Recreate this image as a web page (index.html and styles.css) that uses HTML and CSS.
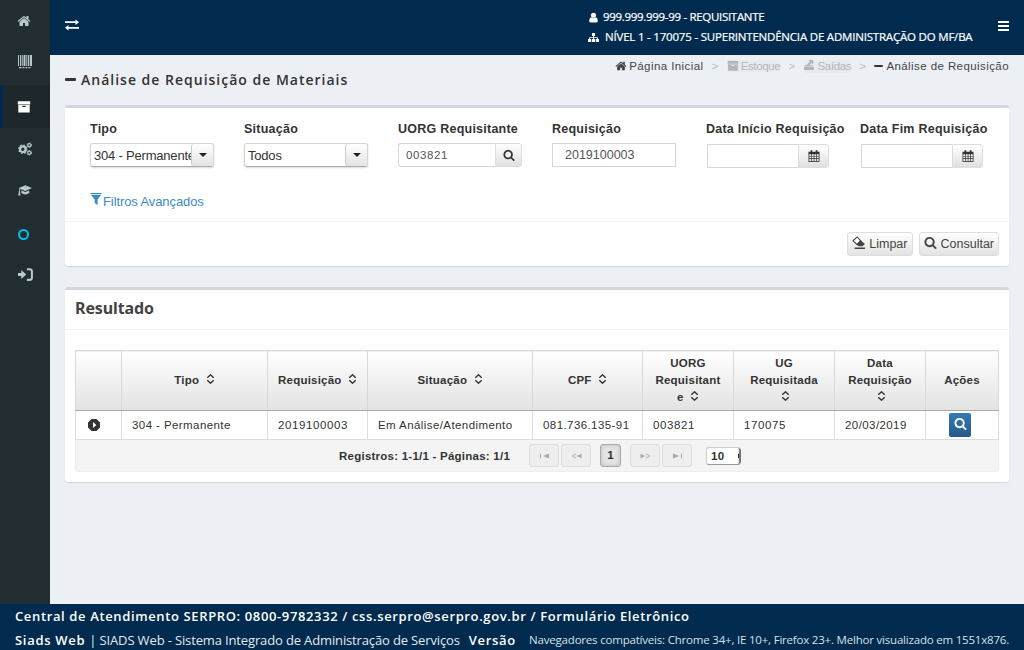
FILE: index.html
```html
<!DOCTYPE html>
<html lang="pt-br">
<head>
    <meta charset="UTF-8">
    <meta name="viewport" content="width=device-width, initial-scale=1.0">
    <title>Siads Web</title>
    <link rel="stylesheet" href="styles.css">
</head>
<body>
    <svg class="sprite">
        <symbol id="i-search" viewBox="0 0 1792 1792"><path d="M1216 832q0-185-131.5-316.5t-316.5-131.5-316.5 131.5-131.5 316.5 131.5 316.5 316.5 131.5 316.5-131.5 131.5-316.5zm512 832q0 52-38 90t-90 38q-54 0-90-38l-343-342q-179 124-399 124-143 0-273.5-55.5t-225-150-150-225-55.5-273.5 55.5-273.5 150-225 225-150 273.5-55.5 273.5 55.5 225 150 150 225 55.5 273.5q0 220-124 399l343 343q37 37 37 90z"/></symbol>
        <symbol id="i-home" viewBox="0 0 1792 1792"><path d="M1472 992v480q0 26-19 45t-45 19h-384v-384h-256v384h-384q-26 0-45-19t-19-45v-480q0-1 .5-3t.5-3l575-474 575 474q1 2 1 6zm223-69l-62 74q-8 9-21 11h-3q-13 0-21-7l-692-577-692 577q-12 8-24 7-13-2-21-11l-62-74q-8-10-7-23.5t11-21.5l719-599q32-26 76-26t76 26l244 204v-195q0-14 9-23t23-9h192q14 0 23 9t9 23v408l219 182q10 8 11 21.5t-7 23.5z"/></symbol>
        <symbol id="i-barcode" viewBox="0 0 14 14"><path d="M0 0h1v11H0zM2 0h1v11H2zM3.700 0h1v11h-1zM5.500 0h2v11h-2zM8.300 0h1v11h-1zM10 0h1.300v11H10zM12 0h2v11h-2zM1 12h2.500v1.200H1zM4.500 12h2v1.200h-2zM7.500 12h2v1.200h-2zM10.500 12h2v1.200h-2z"/></symbol>
        <symbol id="i-archive" viewBox="0 0 14 14"><path fill-rule="evenodd" d="M.8 1.200h12.400v3.300H.8zM1.300 4.900h11.400v7.600H1.300zM5.300 5.700V7h3.400V5.700z"/></symbol>
        <symbol id="i-cogs" viewBox="0 0 14 14">
            <g fill="none" stroke="currentColor">
                <circle cx="4.800" cy="7.200" r="2.800" stroke-width="2.200"/>
                <circle cx="4.800" cy="7.200" r="4.100" stroke-width="1.300" stroke-dasharray="1.700 1.520"/>
                <circle cx="11.300" cy="3.200" r="1.600" stroke-width="1.300"/>
                <circle cx="11.300" cy="3.200" r="2.300" stroke-width=".8" stroke-dasharray="1.100 1.300"/>
                <circle cx="11.300" cy="10.800" r="1.600" stroke-width="1.300"/>
                <circle cx="11.300" cy="10.800" r="2.300" stroke-width=".8" stroke-dasharray="1.100 1.300"/>
            </g>
        </symbol>
        <symbol id="i-cap" viewBox="0 0 14 14"><path d="M7.300 1.300L14 4.100 7.300 7 2.400 5.100C2 5.800 1.900 6.400 1.900 7.200q.8.600.2 1.400l.5 3H.2l.6-3Q.2 7.800 1 7.200 1 5.800 1.500 4.700L.8 4.100zM3.400 6.400L7.300 8l3.800-1.600.2 2.400q-1.500 1.700-4 1.700t-4-1.700z"/></symbol>
        <symbol id="i-signin" viewBox="0 0 14 14"><path d="M0 5.600h3V2.800L7.800 7 3 11.200V8.400H0z"/><path d="M8.300 2h2.500Q13 2 13 4.200v5.600Q13 12 10.800 12H8.300" fill="none" stroke="currentColor" stroke-width="1.900"/></symbol>
        <symbol id="i-exchange" viewBox="0 0 14 14"><path d="M0 3.300h10.500V1.500L14 4.200l-3.500 2.700V5.100H0zM14 8.900H3.500V7.100L0 9.800l3.500 2.700v-1.800H14z"/></symbol>
        <symbol id="i-user" viewBox="0 0 12 12"><circle cx="6" cy="3.600" r="2.800"/><path d="M3.300 5.700Q1.300 6.500 1.300 9.800q0 1.700 1.700 1.700h6q1.700 0 1.700-1.700 0-3.300-2-4.100Q6 8 3.300 5.700z"/></symbol>
        <symbol id="i-sitemap" viewBox="0 0 12 12"><path d="M4.300 1h3.400v3.300H6.500v1.400h4.200v2H12V11H8.500V7.700h1.200V6.600H6.500v1.100h1.200V11H4.300V7.700h1.200V6.600H2.300v1.100h1.200V11H0V7.700h1.300v-2h4.200V4.300H4.300z"/></symbol>
        <symbol id="i-export" viewBox="0 0 12 12"><path d="M0 8.500h12V12H0zM1 6.200h10v1.500H1zM5.500 0H11v5.300L9.300 3.700 6.500 6.200H3l4-4z"/></symbol>
        <symbol id="i-calendar" viewBox="0 0 12 12"><path fill-rule="evenodd" d="M.5 1.800h2V.3h1.800v1.500h3.400V.3h1.800v1.500h2V12H.5zM1.300 4.300v1.600h1.800V4.300zm2.500 0v1.600h1.900V4.300zm2.600 0v1.600h1.800V4.300zm2.500 0v1.600h1.800V4.300zM1.300 6.600v1.700h1.800V6.600zm2.500 0v1.700h1.900V6.600zm2.600 0v1.700h1.800V6.600zm2.500 0v1.700h1.800V6.600zM1.300 9v2.200h1.800V9zm2.500 0v2.200h1.900V9zm2.600 0v2.200h1.800V9zm2.500 0v2.200h1.800V9z"/></symbol>
        <symbol id="i-filter" viewBox="0 0 12 12"><path d="M.5 0h11v1.300H.5zM1 2h10L7.600 6.500V12L4.700 10V6.500z"/></symbol>
        <symbol id="i-eraser" viewBox="0 0 12 12"><path d="M1 4.400L4.800.9l3.300 3.600L4.700 8z" fill="#fff" stroke="currentColor"/><path d="M7.700 3.700L12 7.400 9.600 9.500H6.300L4 7.600zM2.500 10.500H12V12H2.500z"/></symbol>
        <symbol id="i-sort" viewBox="0 0 8 10"><path d="M.8 3.800L4 .8l3.200 3M.8 6.200L4 9.200l3.200-3" fill="none" stroke="currentColor" stroke-width="1.400"/></symbol>
        <symbol id="i-play" viewBox="0 0 12 12"><path fill-rule="evenodd" d="M3.500 0h5L12 3.500v5L8.500 12h-5L0 8.500v-5zM5 3v6l3.300-3z"/></symbol>
        <symbol id="i-first" viewBox="0 0 10 6"><path d="M.5.500h1v5h-1zM9.500.5v5L3.500 3z"/></symbol>
        <symbol id="i-prev" viewBox="0 0 12 6"><path d="M11.500.5v5L6 3z"/><path d="M5.500.7L1.300 3l4.200 2.300" fill="none" stroke="currentColor"/></symbol>
    </svg>

    <div class="wrapper">
        <nav class="sidebar">
            <a class="menu-item"><svg><use href="#i-home"/></svg></a>
            <a class="menu-item"><svg><use href="#i-barcode"/></svg></a>
            <a class="menu-item active"><svg><use href="#i-archive"/></svg></a>
            <a class="menu-item"><svg><use href="#i-cogs"/></svg></a>
            <a class="menu-item"><svg><use href="#i-cap"/></svg></a>
            <a class="menu-item"><span class="circle"></span></a>
            <a class="menu-item"><svg><use href="#i-signin"/></svg></a>
        </nav>

        <div class="main">
            <header class="navbar">
                <svg class="toggle"><use href="#i-exchange"/></svg>
                <div class="user-info">
                    <div class="user-line"><svg><use href="#i-user"/></svg><span class="user-name">999.999.999-99 - REQUISITANTE</span></div>
                    <div class="user-line"><svg><use href="#i-sitemap"/></svg><span class="user-unit">NÍVEL 1 - 170075 - SUPERINTENDÊNCIA DE ADMINISTRAÇÃO DO MF/BA</span></div>
                </div>
                <div class="bars"><i></i><i></i><i></i></div>
            </header>

            <section class="content-header">
                <h1><i class="minus"></i>Análise de Requisição de Materiais</h1>
                <div class="breadcrumb">
                    <span class="crumb"><svg><use href="#i-home"/></svg>Página Inicial</span>
                    <span class="sep">&gt;</span>
                    <span class="crumb disabled"><svg><use href="#i-archive"/></svg>Estoque</span>
                    <span class="sep">&gt;</span>
                    <span class="crumb disabled"><svg class="export"><use href="#i-export"/></svg>Saídas</span>
                    <span class="sep">&gt;</span>
                    <span class="crumb"><i class="minus"></i>Análise de Requisição</span>
                </div>
            </section>

            <div class="box filter-box">
                <div class="filters">
                    <div class="field">
                        <label>Tipo</label>
                        <div class="select"><span class="select-text">304 - Permanente</span><span class="select-arrow"></span></div>
                    </div>
                    <div class="field">
                        <label>Situação</label>
                        <div class="select"><span class="select-text">Todos</span><span class="select-arrow"></span></div>
                    </div>
                    <div class="field">
                        <label>UORG Requisitante</label>
                        <div class="input-group"><span class="input">003821</span><span class="addon"><svg><use href="#i-search"/></svg></span></div>
                    </div>
                    <div class="field">
                        <label>Requisição</label>
                        <div class="input single">2019100003</div>
                    </div>
                    <div class="field">
                        <label>Data Início Requisição</label>
                        <div class="input-group date"><span class="input"></span><span class="addon"><svg><use href="#i-calendar"/></svg></span></div>
                    </div>
                    <div class="field">
                        <label>Data Fim Requisição</label>
                        <div class="input-group date"><span class="input"></span><span class="addon"><svg><use href="#i-calendar"/></svg></span></div>
                    </div>
                </div>
                <a class="advanced"><svg><use href="#i-filter"/></svg>Filtros Avançados</a>
                <div class="box-footer">
                    <button class="btn"><svg><use href="#i-eraser"/></svg>Limpar</button>
                    <button class="btn"><svg><use href="#i-search"/></svg>Consultar</button>
                </div>
            </div>

            <div class="box result-box">
                <h2>Resultado</h2>
                <table class="grid">
                    <colgroup>
                        <col class="c-toggle"><col class="c-type"><col class="c-req"><col class="c-sit"><col class="c-cpf"><col class="c-uorg"><col class="c-ug"><col class="c-date"><col>
                    </colgroup>
                    <thead>
                        <tr>
                            <th></th>
                            <th>Tipo <svg><use href="#i-sort"/></svg></th>
                            <th>Requisição <svg><use href="#i-sort"/></svg></th>
                            <th>Situação <svg><use href="#i-sort"/></svg></th>
                            <th>CPF <svg><use href="#i-sort"/></svg></th>
                            <th>UORG<br>Requisitant<br>e <svg><use href="#i-sort"/></svg></th>
                            <th>UG<br>Requisitada<br><svg><use href="#i-sort"/></svg></th>
                            <th>Data<br>Requisição<br><svg><use href="#i-sort"/></svg></th>
                            <th>Ações</th>
                        </tr>
                    </thead>
                    <tbody>
                        <tr>
                            <td class="expand"><svg><use href="#i-play"/></svg></td>
                            <td>304 - Permanente</td>
                            <td class="number">2019100003</td>
                            <td>Em Análise/Atendimento</td>
                            <td>081.736.135-91</td>
                            <td class="number">003821</td>
                            <td class="number">170075</td>
                            <td>20/03/2019</td>
                            <td class="actions"><a class="btn-view"><svg><use href="#i-search"/></svg></a></td>
                        </tr>
                    </tbody>
                </table>
                <div class="paginator">
                    <span class="records">Registros: 1-1/1 - Páginas: 1/1</span>
                    <span class="page-btn"><svg><use href="#i-first"/></svg></span>
                    <span class="page-btn"><svg><use href="#i-prev"/></svg></span>
                    <span class="page-current">1</span>
                    <span class="page-btn flip"><svg><use href="#i-prev"/></svg></span>
                    <span class="page-btn flip"><svg><use href="#i-first"/></svg></span>
                    <span class="page-size">10<i></i></span>
                </div>
            </div>
        </div>
    </div>

    <footer class="footer">
        <div class="contact">Central de Atendimento SERPRO: 0800-9782332 / css.serpro@serpro.gov.br / Formulário Eletrônico</div>
        <div class="about">
            <span class="strong">Siads Web</span>
            <span class="system">| SIADS Web - Sistema Integrado de Administração de Serviços</span>
            <span class="strong version">Versão</span>
            <span class="browsers">Navegadores compatíveis: Chrome 34+, IE 10+, Firefox 23+. Melhor visualizado em 1551x876.</span>
        </div>
    </footer>
</body>
</html>
```
FILE: styles.css
```css
* {
    box-sizing: border-box;
}

body {
    margin: 0;
    height: 650px;
    display: flex;
    flex-direction: column;
    overflow: hidden;
    background-color: #ecf0f5;
    color: #333;
    font-family: "Liberation Sans", Arial, sans-serif;
    font-size: 13px;
}

svg {
    fill: currentColor;
    flex: none;
}

.sprite {
    display: none;
}

.wrapper {
    display: flex;
    height: 604px;
}

/* Sidebar */
.sidebar {
    flex: none;
    width: 50px;
    background-color: #222d32;
    color: #b8c7ce;
}

.menu-item {
    display: flex;
    align-items: center;
    height: 42px;
    padding-left: 18px;
}

.menu-item svg {
    width: 14px;
    height: 14px;
}

.menu-item:nth-child(1) svg {
    margin-left: -1px;
}

.menu-item:nth-child(2) {
    height: 39px;
    margin-bottom: 4px;
}

.menu-item:nth-child(5) {
    height: 41px;
}

.menu-item:nth-child(6) {
    height: 46px;
}

.menu-item:nth-child(7) {
    height: 35px;
}

.menu-item:nth-child(7) svg {
    width: 15px;
    height: 15px;
}

.menu-item.active {
    height: 43px;
    padding-left: 14px;
    border-left: 3px solid #002b4e;
    background-color: #1e282c;
    color: #fff;
}

.circle {
    width: 11px;
    height: 11px;
    border: 2px solid #00c0ef;
    border-radius: 50%;
}

/* Header */
.main {
    flex: 1;
    min-width: 0;
}

.navbar {
    display: flex;
    height: 55px;
    background-color: #002b4e;
    color: #fff;
    font-family: "Open Sans", sans-serif;
    font-size: 11.5px;
}

.toggle {
    width: 14px;
    height: 14px;
    margin: 18px 0 0 15px;
}

.user-info {
    width: 410px;
    margin-left: auto;
    padding-top: 6px;
}

.user-line {
    display: flex;
    align-items: center;
    height: 20px;
    white-space: nowrap;
}

.user-line svg {
    width: 11px;
    height: 11px;
    margin-top: 2px;
    margin-right: 4px;
}

.user-line span {
    -webkit-text-stroke: 0.2px #fff;
}

.user-name {
    letter-spacing: -0.31px;
}

.user-unit {
    margin-left: 2px;
    letter-spacing: -0.2px;
}

.bars {
    width: 11px;
    margin: 21px 15px 0 0;
}

.bars i {
    display: block;
    height: 2px;
    margin-bottom: 2px;
    background-color: #fff;
}

.content-header {
    display: flex;
    justify-content: space-between;
    height: 50px;
    padding: 0 15px;
}

.content-header h1 {
    display: flex;
    align-items: center;
    height: 20px;
    margin: 14px 0 0;
    font-family: "Open Sans", sans-serif;
    font-size: 14px;
    font-weight: 600;
    letter-spacing: 1px;
    white-space: nowrap;
}

.minus {
    width: 11px;
    height: 3px;
    margin-right: 5px;
    border-radius: 1px;
    background-color: #333;
}

.breadcrumb {
    display: flex;
    align-items: center;
    height: 14px;
    margin-top: 4px;
    font-size: 11.5px;
    letter-spacing: 0.42px;
    white-space: nowrap;
    color: #444;
}

.crumb {
    display: flex;
    align-items: center;
}

.crumb svg {
    width: 12px;
    height: 12px;
    margin-right: 2px;
}

.crumb .minus {
    width: 9px;
    height: 2px;
    margin-right: 3px;
}

.crumb.disabled {
    background-color: #e8ebee;
    color: #b3b5b8;
    letter-spacing: -0.35px;
}

.crumb .export {
    width: 10px;
    height: 10px;
    margin-right: 4px;
    margin-bottom: 3px;
}

.sep {
    padding: 0 8px;
    color: #bbb;
}

/* Boxes */
.box {
    margin: 0 15px 20px;
    border-top: 3px solid #d2d6de;
    border-radius: 3px;
    background-color: #fff;
    box-shadow: 0 1px 1px rgba(0, 0, 0, 0.1);
}

.filter-box {
    height: 161px;
    margin-bottom: 21px;
}

.filters {
    display: grid;
    grid-template-columns: repeat(6, 154px);
    height: 78px;
    padding: 12px 0 0 25px;
}

.field label {
    display: block;
    height: 23px;
    line-height: 18px;
    font-size: 12.5px;
    font-weight: bold;
    letter-spacing: 0.24px;
    white-space: nowrap;
}

.select {
    display: flex;
    width: 124px;
    height: 24px;
    border: 1px solid #d5d5d5;
    border-bottom-color: #aaa;
    border-radius: 3px;
    box-shadow: 0 1px 2px rgba(0, 0, 0, 0.15);
}

.select-text {
    flex: 1;
    padding-left: 3px;
    line-height: 23px;
    letter-spacing: -0.2px;
    overflow: hidden;
    white-space: nowrap;
}

.select-arrow {
    display: flex;
    align-items: center;
    justify-content: center;
    width: 22px;
    border-left: 1px solid #ccc;
    border-radius: 3px;
    background: linear-gradient(#fff, #e3e3e3);
}

.select-arrow::before {
    content: "";
    border: 4px solid transparent;
    border-top-color: #222;
    border-bottom: 0;
}

.input-group {
    display: flex;
    width: 124px;
    height: 24px;
}

.input {
    flex: 1;
    border: 1px solid #d2d6de;
    padding-left: 7px;
    line-height: 22px;
    font-size: 11.5px;
    letter-spacing: 0.6px;
    color: #555;
}

.input-group .input {
    border-right: 0;
    border-radius: 3px 0 0 3px;
}

.input.single {
    width: 124px;
    height: 24px;
    padding-left: 12px;
    font-size: 12.5px;
    letter-spacing: normal;
}

.addon {
    display: flex;
    align-items: center;
    justify-content: center;
    width: 27px;
    border: 1px solid #ddd;
    border-radius: 0 3px 3px 0;
    background: linear-gradient(#fff, #e0e0e0);
}

.addon svg {
    width: 12px;
    height: 12px;
}

.input-group.date {
    width: 122px;
    margin: 1px 0 0 1px;
}

.date .input {
    border-radius: 0;
}

.date .addon {
    width: 31px;
}

.advanced {
    display: flex;
    height: 35px;
    padding: 7px 0 0 25px;
    color: #3c8dbc;
    line-height: 18px;
    letter-spacing: -0.1px;
}

.advanced svg {
    width: 12px;
    height: 12px;
    margin-right: 1px;
}

.box-footer {
    display: flex;
    justify-content: flex-end;
    gap: 6px;
    padding: 10px 10px 0;
    border-top: 1px solid #f4f4f4;
}

.btn {
    display: flex;
    align-items: center;
    height: 24px;
    padding: 0 4px;
    border: 1px solid #ddd;
    border-radius: 3px;
    background: linear-gradient(#fff, #e3e3e3);
    color: #444;
    font-family: inherit;
    font-size: 12.5px;
}

.btn svg {
    width: 13px;
    height: 13px;
    margin: 0 4px 4px 0;
}

/* Result table */
.result-box {
    height: 195px;
    margin-bottom: 0;
}

.result-box h2 {
    height: 40px;
    margin: 0 0 20px;
    padding-left: 10px;
    border-bottom: 1px solid #f4f4f4;
    font-family: "Noto Sans", sans-serif;
    font-size: 16px;
    line-height: 37px;
    letter-spacing: -0.1px;
    color: #444;
}

.grid {
    width: 924px;
    margin-left: 10px;
    table-layout: fixed;
    border-collapse: collapse;
    font-size: 11.5px;
}

.c-toggle { width: 46px; }
.c-type { width: 146px; }
.c-req { width: 100px; }
.c-sit { width: 165px; }
.c-cpf { width: 110px; }
.c-uorg { width: 91px; }
.c-ug { width: 101px; }
.c-date { width: 91px; }

.grid th {
    height: 60px;
    padding: 0;
    border: 1px solid #d8d8d8;
    border-bottom-color: #aaa;
    background: linear-gradient(#fff, #e2e2e2);
    line-height: 17px;
    letter-spacing: 0.22px;
    white-space: nowrap;
}

.grid th svg {
    width: 9px;
    height: 10px;
    margin-left: 3px;
}

.grid td {
    height: 29px;
    padding: 0 0 0 10px;
    border: 1px solid #ddd;
    letter-spacing: 0.42px;
    white-space: nowrap;
}

.grid td.number {
    letter-spacing: 0.6px;
}

.grid td.expand {
    padding-left: 12px;
}

.expand svg {
    display: block;
    width: 12px;
    height: 12px;
}

.grid td.actions {
    padding-left: 23px;
}

.btn-view {
    display: flex;
    justify-content: center;
    width: 22px;
    height: 24px;
    padding-top: 4px;
    border-radius: 2px;
    background: linear-gradient(#337ab7, #265a88);
    color: #fff;
}

.btn-view svg {
    width: 13px;
    height: 13px;
}

.paginator {
    display: flex;
    align-items: center;
    height: 32px;
    margin: 0 10px;
    padding-left: 263px;
    border: 1px solid #eee;
    border-top: 0;
    border-radius: 0 0 3px 3px;
    background-color: #f4f4f4;
    font-size: 11.5px;
    font-weight: bold;
}

.records {
    width: 190px;
    letter-spacing: 0.24px;
    white-space: nowrap;
}

.page-btn {
    display: flex;
    align-items: center;
    justify-content: center;
    width: 30px;
    height: 23px;
    margin-right: 2px;
    border: 1px solid #ddd;
    border-radius: 3px;
    background-color: #eee;
    color: #aaa;
}

.page-btn svg {
    width: 11px;
    height: 6px;
}

.page-btn.flip svg {
    transform: scaleX(-1);
}

.page-current {
    width: 21px;
    height: 23px;
    margin: 0 9px 0 7px;
    border: 1px solid #aaa;
    border-radius: 3px;
    background-color: #e4e4e4;
    box-shadow: inset 0 0 4px #bbb;
    line-height: 21px;
    text-align: center;
}

.page-size {
    display: flex;
    justify-content: space-between;
    width: 35px;
    height: 18px;
    margin-left: 12px;
    padding-left: 4px;
    border: 1px solid #ccc;
    border-bottom-color: #999;
    border-right: 0;
    border-radius: 3px;
    background-color: #fff;
    line-height: 17px;
    letter-spacing: 0.3px;
}

.page-size i {
    width: 3px;
    border-right: 2px solid #777;
    border-radius: 0 3px 3px 0;
    background: linear-gradient(transparent 6px, #222 6px, #222 10px, transparent 10px);
}

/* Footer */
.footer {
    height: 46px;
    padding: 0 15px;
    background-color: #002b4e;
    color: #fff;
    font-family: "Open Sans", sans-serif;
    font-size: 13px;
    white-space: nowrap;
}

.contact {
    height: 24px;
    line-height: 24px;
    font-weight: 600;
    letter-spacing: 0.63px;
}

.about {
    display: flex;
    line-height: 24px;
}

.strong {
    font-weight: 600;
    letter-spacing: 0.7px;
}

.system {
    margin-left: 4px;
    color: #e4eaf0;
    letter-spacing: -0.14px;
}

.version {
    margin-left: 9px;
}

.browsers {
    margin-left: auto;
    color: #d8e0e8;
    font-size: 11.5px;
    letter-spacing: -0.2px;
}
```
